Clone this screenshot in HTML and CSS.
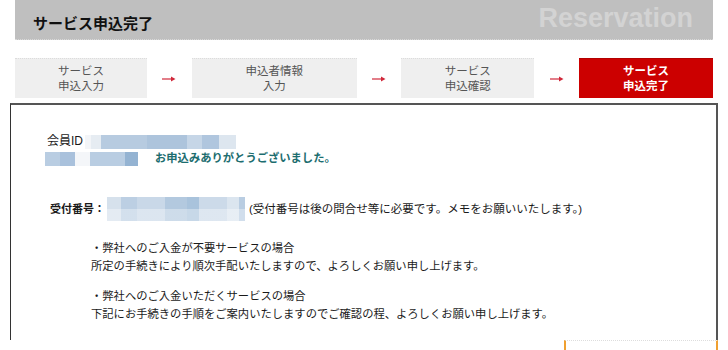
FILE: index.html
```html
<!DOCTYPE html>
<html lang="ja">
<head>
  <meta charset="UTF-8">
  <meta name="viewport" content="width=device-width, initial-scale=1.0">
  <title>サービス申込完了</title>
  <link rel="stylesheet" href="styles.css">
</head>
<body>
  <div class="page-head">
    <h1>サービス申込完了</h1>
    <span class="head-en">Reservation</span>
  </div>

  <ol class="steps">
    <li class="step">サービス<br>申込入力</li>
    <li class="arrow"><svg width="14" height="8" viewBox="0 0 14 8"><path d="M0 4H12" stroke="#d0283a" stroke-width="1.2"/><path d="M9 1.5L13.5 4L9 6.5Z" fill="#d0283a"/></svg></li>
    <li class="step">申込者情報<br>入力</li>
    <li class="arrow"><svg width="14" height="8" viewBox="0 0 14 8"><path d="M0 4H12" stroke="#d0283a" stroke-width="1.2"/><path d="M9 1.5L13.5 4L9 6.5Z" fill="#d0283a"/></svg></li>
    <li class="step">サービス<br>申込確認</li>
    <li class="arrow"><svg width="14" height="8" viewBox="0 0 14 8"><path d="M0 4H12" stroke="#d0283a" stroke-width="1.2"/><path d="M9 1.5L13.5 4L9 6.5Z" fill="#d0283a"/></svg></li>
    <li class="step current">サービス<br>申込完了</li>
  </ol>

  <div class="content">
    <div class="member">
      <p class="member-id">会員ID<span class="mask mask-id"></span></p>
      <p class="member-name"><span class="mask mask-name"></span><span class="thanks">お申込みありがとうございました。</span></p>
    </div>

    <p class="receipt">
      <strong>受付番号：</strong><span class="mask mask-no"></span><span class="receipt-note">(受付番号は後の問合せ等に必要です。メモをお願いいたします。)</span>
    </p>

    <div class="notes">
      <p>・弊社へのご入金が不要サービスの場合<br>所定の手続きにより順次手配いたしますので、よろしくお願い申し上げます。</p>
      <p>・弊社へのご入金いただくサービスの場合<br>下記にお手続きの手順をご案内いたしますのでご確認の程、よろしくお願い申し上げます。</p>
    </div>
  </div>

  <div class="next-box"></div>
</body>
</html>
```

FILE: styles.css
```css
body {
  margin: 0;
  height: 350px;
  background-color: #fff;
  font-family: "Liberation Sans", "Noto Sans CJK JP", sans-serif;
  color: #1a1a1a;
  overflow: hidden;
}

p {
  margin: 0;
}

.page-head {
  margin: 0 15px;
  height: 40px;
  background-color: #bfbfbf;
  border-bottom: 1px dotted #d8d8d8;
  box-sizing: border-box;
  display: flex;
  align-items: center;
  justify-content: space-between;
  padding: 0 20px 0 18px;
}

.page-head h1 {
  margin: 6px 0 0;
  font-size: 15px;
  font-weight: bold;
  color: #111;
}

.head-en {
  font-size: 27px;
  font-weight: bold;
  color: #d3d3d3;
  margin-top: -2px;
}

.steps {
  list-style: none;
  margin: 18px 15px 0;
  padding: 0;
  display: grid;
  grid-template-columns: 132px 1fr 165px 1fr 133px 1fr 134px;
  height: 40px;
}

.step {
  background-color: #efefef;
  border-top: 1px dotted #dcdcdc;
  box-sizing: border-box;
  display: flex;
  align-items: center;
  justify-content: center;
  text-align: center;
  font-size: 11.5px;
  line-height: 15px;
  color: #555;
}

.step.current {
  background-color: #cc0000;
  border-top: 1px solid #b30000;
  color: #fff;
  font-weight: bold;
}

.arrow {
  display: flex;
  align-items: center;
  justify-content: center;
  padding-top: 1px;
}

.content {
  margin: 5px 10px 0;
  height: 237px;
  box-sizing: border-box;
  border-top: 2px solid #555;
  border-left: 1px solid #333;
  border-right: 2px solid #555;
  padding: 28px 0 0 36px;
  font-size: 11.3px;
  line-height: 17px;
}

.member-id {
  display: flex;
  align-items: center;
  font-size: 12px;
}

.member-name {
  display: flex;
  align-items: center;
  margin-left: -2px;
}

.mask {
  display: inline-block;
}

.mask-id {
  width: 151px;
  height: 14px;
  margin-left: 2px;
  background: linear-gradient(90deg, #f3f5f8 0 6px, #e6ecf2 6px 16px, #b7cbe0 16px 62px, #adc4dc 62px 102px, #c6d6e7 102px 117px, #b0c6de 117px 134px, #dde6ef 134px 151px);
}

.mask-name {
  width: 93px;
  height: 14px;
  background: linear-gradient(90deg, #b9cde2 0 15px, #a9c1dc 15px 30px, #f4f6f9 30px 45px, #b9cde2 45px 80px, #94b3d2 80px 93px);
}

.thanks {
  margin-left: 17px;
  color: #1c6d6f;
  font-weight: bold;
}

.receipt {
  display: flex;
  align-items: center;
  margin: 30px 0 0 3px;
}

.receipt strong {
  font-size: 11px;
}

.mask-no {
  width: 138px;
  height: 24px;
  margin: 0 4px 0 2px;
  background:
    linear-gradient(180deg, transparent 0 12px, rgba(255, 255, 255, 0.35) 12px 24px),
    linear-gradient(90deg, #d6e1ec 0 14px, #bccfe3 14px 30px, #c9d8e8 30px 58px, #b3c9df 58px 80px, #a9c3dc 80px 92px, #ccdae9 92px 120px, #dbe5ef 120px 132px, #b9cde2 132px 138px);
}

.receipt-note {
  font-size: 11.5px;
}

.notes {
  margin: 19px 0 0 44px;
}

.notes p {
  margin-bottom: 13px;
  line-height: 17.5px;
}

.next-box {
  margin: 0 10px 0 564px;
  height: 10px;
  border-left: 2px solid #f0a030;
  border-right: 2px solid #f0a030;
  border-top: 1px dotted #ddd;
}
```
